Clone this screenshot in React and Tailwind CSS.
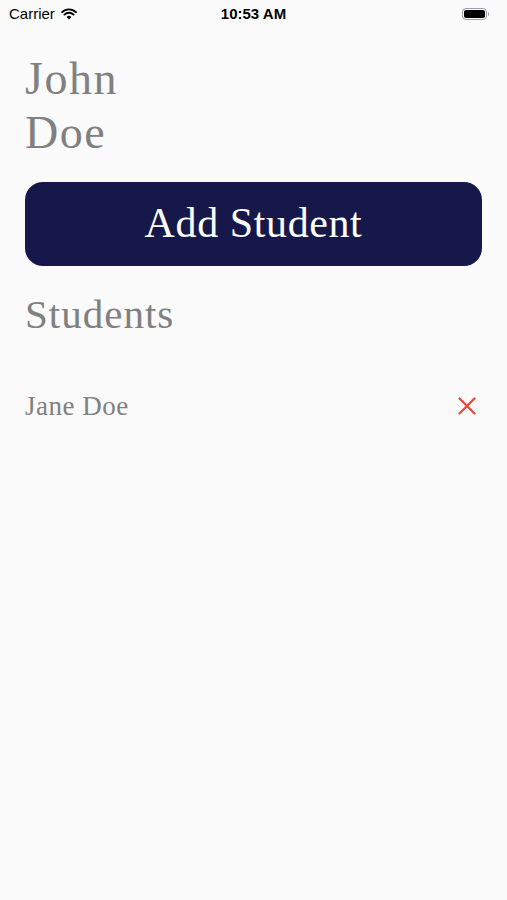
import React from "react";

const StatusBar = () => (
  <div className="h-[28px] flex items-center justify-between px-[9px] font-['Liberation_Sans',sans-serif] text-[15px] text-black">
    <div className="flex items-center gap-[6px] w-[120px]">
      <span>Carrier</span>
      <svg width="16" height="12" viewBox="0 0 16 12">
        <path d="M8 11.5 L5.6 8.9 A3.5 3.5 0 0 1 10.4 8.9 Z" fill="black" />
        <path d="M3.4 6.6 A6.6 6.6 0 0 1 12.6 6.6" stroke="black" strokeWidth="1.9" fill="none" strokeLinecap="round" />
        <path d="M1.1 4.2 A9.8 9.8 0 0 1 14.9 4.2" stroke="black" strokeWidth="1.9" fill="none" strokeLinecap="round" />
      </svg>
    </div>
    <span className="font-bold">10:53 AM</span>
    <div className="w-[120px] flex justify-end pr-[9px]">
      <div className="flex items-center">
        <div className="w-[25px] h-[12px] rounded-[4px] border border-gray-400 p-[1px]">
          <div className="w-full h-full rounded-[2px] bg-black" />
        </div>
        <div className="w-[1.5px] h-[4px] bg-gray-400 rounded-r ml-[1px]" />
      </div>
    </div>
  </div>
);

export default function App() {
  return (
    <div className="w-[507px] h-[900px] bg-[#fafafa] font-['Liberation_Serif',serif]">
      <StatusBar />
      <div className="px-[25px] pt-[24px]">
        <h1 className="text-[46px] leading-[54px] text-[#808080] tracking-[1.5px]">
          John
          <br />
          Doe
        </h1>
        <button className="mt-[22px] w-full h-[84px] rounded-[18px] bg-[#17184a] text-white text-[42px] tracking-[0.6px] flex items-center justify-center pb-[2px]">
          Add Student
        </button>
        <h2 className="mt-[24px] text-[41px] leading-[48px] text-[#808080] tracking-[1px]">Students</h2>
        <div className="mt-[48px] flex items-center justify-between">
          <span className="text-[27px] text-[#808080] tracking-[0.5px]">Jane Doe</span>
          <svg width="18" height="18" viewBox="0 0 18 18" className="mr-[6px]">
            <path d="M1.5 1.5 L16.5 16.5 M16.5 1.5 L1.5 16.5" stroke="#e8453c" strokeWidth="2.2" strokeLinecap="round" />
          </svg>
        </div>
      </div>
    </div>
  );
}
